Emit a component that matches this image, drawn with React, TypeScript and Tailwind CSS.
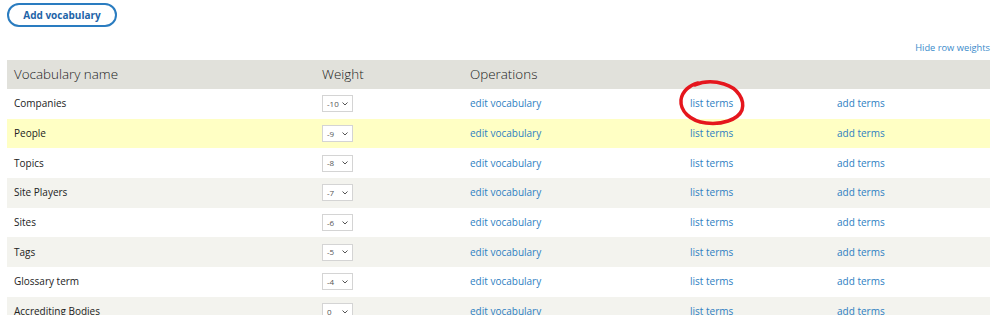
import React from "react";

const rows = [
  { name: "Companies", w: "-10" },
  { name: "People", w: "-9" },
  { name: "Topics", w: "-8" },
  { name: "Site Players", w: "-7" },
  { name: "Sites", w: "-6" },
  { name: "Tags", w: "-5" },
  { name: "Glossary term", w: "-4" },
  { name: "Accrediting Bodies", w: "0" },
];

function Select({ v }: { v: string }) {
  return (
    <div className="flex h-[17px] w-[31px] items-center justify-between border border-[#d4d4d4] bg-white pl-[4px] pr-[4px] text-[8px] text-[#555]">
      <span>{v}</span>
      <svg width="6" height="4" viewBox="0 0 6 4" className="text-[#555]">
        <path d="M0.5 0.5 L3 3 L5.5 0.5" fill="none" stroke="currentColor" strokeWidth="1" />
      </svg>
    </div>
  );
}

export default function App() {
  return (
    <div className="relative h-[315px] w-[1000px] overflow-hidden bg-white font-['Open_Sans',sans-serif] text-[#333]">
      <div className="pl-[7px] pt-[3px]">
        <button className="flex h-[24px] w-[110px] items-center justify-center rounded-full border-2 border-[#2a7cc0] text-[10px] font-bold text-[#1e64a8]">
          Add vocabulary
        </button>
      </div>
      <div className="flex h-[33px] items-end justify-end pr-[10px] pb-[5px] text-[9.3px] text-[#3b8bcb]">
        Hide row weights
      </div>
      <div className="mx-[7px] w-[983px]">
        <div className="grid h-[29px] grid-cols-[308px_148px_1fr] items-center bg-[#e1e1db] text-[13.4px] font-light text-[#222]">
          <div className="pl-[7px]">Vocabulary name</div>
          <div className="pl-[7px]">Weight</div>
          <div className="pl-[7px]">Operations</div>
        </div>
        {rows.map((r, i) => (
          <div
            key={r.name}
            className={
              "grid h-[29.7px] grid-cols-[308px_148px_220px_147px_1fr] items-center text-[10px] " +
              (i === 1 ? "bg-[#ffffc4]" : i % 2 === 1 ? "bg-[#f3f3ee]" : "bg-white")
            }
          >
            <div className="pl-[7px] text-[#222]">{r.name}</div>
            <div className="pl-[7px]">
              <Select v={r.w} />
            </div>
            <div className="pl-[7px] text-[#2e80c2]">edit vocabulary</div>
            <div className="pl-[7px] text-[#2e80c2]">list terms</div>
            <div className="pl-[7px] text-[#2e80c2]">add terms</div>
          </div>
        ))}
      </div>
      <svg
        className="pointer-events-none absolute left-[676px] top-[76px]"
        width="74"
        height="52"
        viewBox="0 0 74 52"
      >
        <path
          d="M22 7 C14 9 6 15 5 24 C4 35 14 45 30 47 C45 49 62 44 66 34 C69 24 62 12 48 8 C38 5 28 5 19 9"
          fill="none"
          stroke="#e5161d"
          strokeWidth="3.5"
          strokeLinecap="round"
        />
      </svg>
    </div>
  );
}
